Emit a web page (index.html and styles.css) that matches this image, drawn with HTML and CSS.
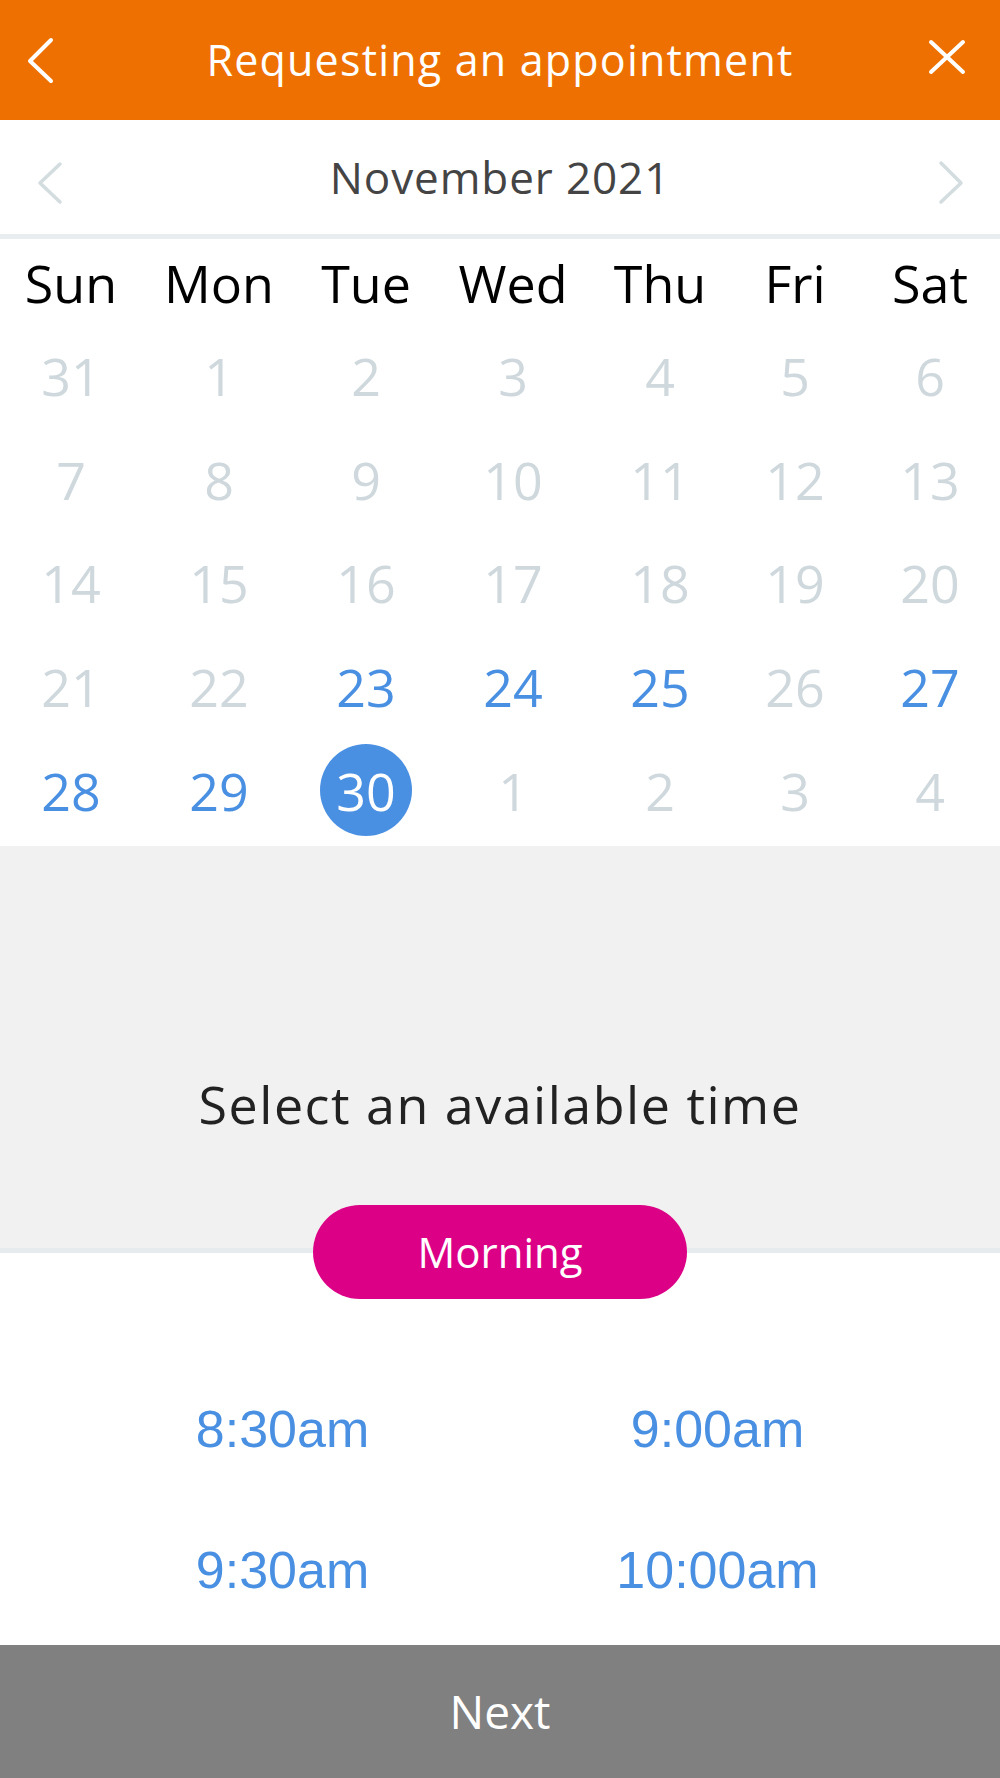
FILE: index.html
```html
<!DOCTYPE html>
<html lang="en">
<head>
<meta charset="utf-8">
<title>Requesting an appointment</title>
<link rel="stylesheet" href="styles.css">
</head>
<body>
<div class="app">
  <header class="header">
    <div class="icon-btn">
      <svg width="80" height="120" viewBox="0 0 80 120"><polyline points="51,40 30,61 51,81" fill="none" stroke="#fff" stroke-width="4" stroke-linecap="round" stroke-linejoin="round"/></svg>
    </div>
    <div class="title">Requesting an appointment</div>
    <div class="icon-btn">
      <svg width="80" height="120" viewBox="0 0 80 120"><path d="M11 42 L43 72 M43 42 L11 72" fill="none" stroke="#fff" stroke-width="4" stroke-linecap="round"/></svg>
    </div>
  </header>

  <div class="month">
    <div class="month-nav">
      <svg width="80" height="114" viewBox="0 0 80 114"><polyline points="60,44 40,63 60,82" fill="none" stroke="#d3dcdf" stroke-width="3.5" stroke-linecap="round" stroke-linejoin="round"/></svg>
    </div>
    <div class="month-label">November 2021</div>
    <div class="month-nav">
      <svg width="80" height="114" viewBox="0 0 80 114"><polyline points="21,43 41,63 21,82" fill="none" stroke="#d3dcdf" stroke-width="3.5" stroke-linecap="round" stroke-linejoin="round"/></svg>
    </div>
  </div>

  <div class="calendar">
    <div class="wd">Sun</div><div class="wd">Mon</div><div class="wd">Tue</div><div class="wd">Wed</div><div class="wd">Thu</div><div class="wd">Fri</div><div class="wd">Sat</div>

    <div class="day">31</div><div class="day">1</div><div class="day">2</div><div class="day">3</div><div class="day">4</div><div class="day">5</div><div class="day">6</div>
    <div class="day">7</div><div class="day">8</div><div class="day">9</div><div class="day">10</div><div class="day">11</div><div class="day">12</div><div class="day">13</div>
    <div class="day">14</div><div class="day">15</div><div class="day">16</div><div class="day">17</div><div class="day">18</div><div class="day">19</div><div class="day">20</div>
    <div class="day">21</div><div class="day">22</div><div class="day avail">23</div><div class="day avail">24</div><div class="day avail">25</div><div class="day">26</div><div class="day avail">27</div>
    <div class="day avail">28</div><div class="day avail">29</div><div class="day sel"><span>30</span></div><div class="day">1</div><div class="day">2</div><div class="day">3</div><div class="day">4</div>
  </div>

  <section class="avail-section">
    <div class="avail-title">Select an available time</div>
  </section>
  <div class="period">Morning</div>

  <div class="times">
    <div class="time">8:30am</div>
    <div class="time">9:00am</div>
    <div class="time">9:30am</div>
    <div class="time">10:00am</div>
  </div>

  <div class="next">Next</div>
</div>
</body>
</html>
```

FILE: styles.css
```css
html, body {
  margin: 0;
  padding: 0;
  background: #fff;
}

.app {
  width: 1000px;
  height: 1778px;
  display: flex;
  flex-direction: column;
  font-family: "Open Sans", "Noto Sans", sans-serif;
  overflow: hidden;
}

.header {
  height: 120px;
  flex: none;
  background: #ee7000;
  display: flex;
  color: #fff;
}

.icon-btn,
.month-nav {
  width: 80px;
  flex: none;
}

.icon-btn svg,
.month-nav svg {
  display: block;
}

.title {
  flex: 1;
  text-align: center;
  font-size: 43px;
  line-height: 120px;
  letter-spacing: 1.2px;
  white-space: nowrap;
}

.month {
  height: 114px;
  flex: none;
  display: flex;
  border-bottom: 5px solid #e8edf0;
}

.month-label {
  flex: 1;
  text-align: center;
  font-size: 44px;
  line-height: 114px;
  letter-spacing: 0.9px;
  color: #444;
}

.calendar {
  flex: none;
  display: grid;
  grid-template-columns: 142px 154px 140px 154px 140px 130px 140px;
  grid-template-rows: 85px repeat(5, 103.6px);
  padding-bottom: 4px;
  background: #fff;
}

.wd {
  font-size: 52px;
  line-height: 82px;
  padding-top: 3px;
  text-align: center;
  color: #000;
}

.day {
  font-size: 52px;
  display: flex;
  align-items: center;
  justify-content: center;
  color: #cfd8dc;
}

.day.avail {
  color: #4a90e2;
}

.day.sel span {
  width: 92px;
  height: 92px;
  border-radius: 50%;
  background: #4a90e2;
  color: #fff;
  display: flex;
  align-items: center;
  justify-content: center;
}

.avail-section {
  flex: none;
  height: 407px;
  box-sizing: border-box;
  padding-top: 223px;
  background: #f1f1f1;
  border-bottom: 5px solid #e6ecee;
}

.avail-title {
  text-align: center;
  font-size: 52px;
  line-height: 70px;
  letter-spacing: 1.5px;
  color: #222;
}

.period {
  flex: none;
  align-self: center;
  margin-top: -48px;
  width: 374px;
  height: 94px;
  border-radius: 47px;
  background: #dc0087;
  color: #fff;
  font-size: 42px;
  line-height: 94px;
  text-align: center;
}

.times {
  flex: none;
  display: grid;
  grid-template-columns: 1fr 1fr;
  grid-auto-rows: 141px;
  padding: 60px 65px 4px;
  font-family: "Liberation Sans", Arial, sans-serif;
  font-size: 52px;
  color: #4a90e2;
}

.time {
  display: flex;
  align-items: center;
  justify-content: center;
}

.next {
  flex: none;
  height: 133px;
  background: #808080;
  color: #fff;
  font-size: 46px;
  line-height: 133px;
  text-align: center;
}
```
